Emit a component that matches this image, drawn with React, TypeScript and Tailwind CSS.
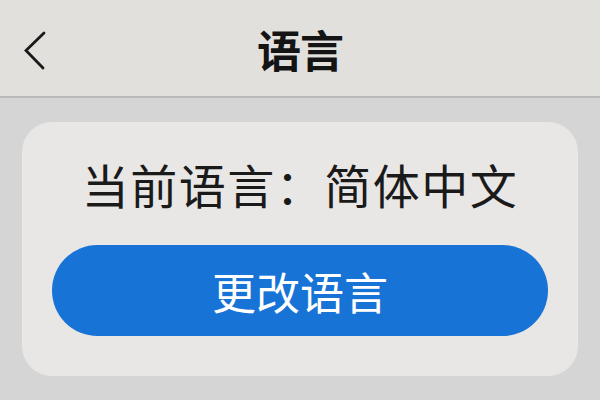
import React from "react";

export default function App() {
  const font = { fontFamily: '"Noto Sans CJK SC", "Noto Sans", sans-serif' };
  return (
    <div className="w-[600px] h-[400px] overflow-hidden bg-[#d4d5d4] flex flex-col" style={font}>
      <div className="h-[98px] shrink-0 bg-[#e1e0dd] border-b-[2px] border-[#b9b9b8] relative flex items-center justify-center">
        <svg className="absolute left-[21px] top-[31px]" width="28" height="40" viewBox="0 0 28 40">
          <path d="M23 2 L5 19.5 L22 37" fill="none" stroke="#1a1a1a" strokeWidth="2.8" strokeLinecap="round" strokeLinejoin="miter" />
        </svg>
        <span className="text-[44px] leading-none font-semibold text-[#141414] mt-[2px] tracking-[-1px]">语言</span>
      </div>
      <div className="flex-1 px-[22px] pt-[24px]">
        <div className="h-[254px] rounded-[30px] bg-[#e8e7e5] flex flex-col items-center px-[30px] pt-[38px]">
          <div className="text-[47px] leading-none text-[#1a1a1a] tracking-[1.5px]">当前语言：简体中文</div>
          <button className="mt-[38px] w-[496px] h-[91px] rounded-full bg-[#1873d7] text-white text-[44px] leading-none flex items-center justify-center">
            更改语言
          </button>
        </div>
      </div>
    </div>
  );
}
